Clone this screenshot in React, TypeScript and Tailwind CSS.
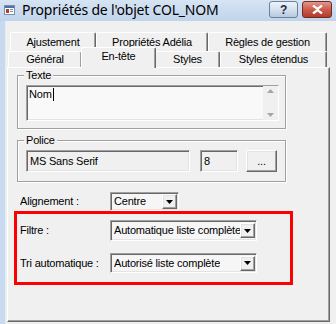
import React from "react";

const sunken =
  "border border-t-[#a0a0a0] border-l-[#a0a0a0] border-b-white border-r-white shadow-[inset_1px_1px_0_#696969,inset_-1px_-1px_0_#e3e3e3]";
const raised =
  "border border-t-white border-l-white border-b-[#696969] border-r-[#696969] shadow-[inset_-1px_-1px_0_#a0a0a0,inset_1px_1px_0_#e3e3e3]";

function Arrow() {
  return (
    <div className={`w-[15px] h-[15px] bg-[#f0f0f0] flex items-center justify-center ${raised}`}>
      <svg width="7" height="4" viewBox="0 0 7 4">
        <path d="M0 0h7L3.5 4z" fill="#000" />
      </svg>
    </div>
  );
}

function Combo({ text, w, h }: { text: string; w: string; h: string }) {
  return (
    <div className={`${w} ${h} bg-[#f6f6f6] flex items-center justify-between pl-[3px] pr-[1px] ${sunken}`}>
      <span className="whitespace-nowrap overflow-hidden">{text}</span>
      <Arrow />
    </div>
  );
}

function Group({ label, className, children }: { label: string; className: string; children: React.ReactNode }) {
  return (
    <div className={`relative border border-[#a0a0a0] shadow-[1px_1px_0_white,inset_1px_1px_0_white] ${className}`}>
      <span className="absolute -top-[8px] left-[6px] px-[2px] bg-[#f0f0f0] leading-[14px]">{label}</span>
      {children}
    </div>
  );
}

function Tab({ label, w, selected }: { label: string; w: string; selected?: boolean }) {
  return (
    <div
      className={`${w} flex justify-center border-t border-l border-t-white border-l-white border-r border-r-[#696969] shadow-[inset_-1px_0_0_#a0a0a0] rounded-tl-[2px] rounded-tr-[2px] bg-[#f0f0f0] ${
        selected ? "relative z-10 h-[21px] -mt-[4px] -mx-[1px] items-start pt-[2px]" : "h-full items-center"
      }`}
    >
      <span className="whitespace-nowrap">{label}</span>
    </div>
  );
}

export default function App() {
  return (
    <div className="w-[336px] h-[324px] overflow-hidden bg-[#f0f0f0] flex flex-col font-['Liberation_Sans',Arial,sans-serif] text-[11px] tracking-[-0.2px] text-black leading-[13px]">
      {/* Title bar */}
      <div className="h-[21px] flex items-center bg-gradient-to-b from-[#d6e4f3] to-[#c0d4eb] relative">
        <svg width="11" height="10" viewBox="0 0 11 10" className="ml-[4px] mt-[-2px]">
          <rect x="0.5" y="0.5" width="10" height="9" fill="#fff" stroke="#7c8ea3" />
          <rect x="1" y="1" width="9" height="2" fill="#4a73b0" />
          <rect x="2" y="4" width="3" height="4" fill="#b04030" />
          <rect x="6" y="4" width="3" height="1" fill="#8090a0" />
          <rect x="6" y="6" width="3" height="1" fill="#8090a0" />
        </svg>
        <span className="ml-[7px] font-['Noto_Sans',sans-serif] text-[14px] tracking-[-0.2px] leading-[18px] mt-[-2px]">
          Propriétés de l'objet COL_NOM
        </span>
        <div className="ml-auto flex gap-[4px] mr-[4px] mt-[-2px]">
          <div className="w-[29px] h-[17px] rounded-[3px] border border-[#6b819b] bg-gradient-to-b from-[#eef3f9] via-[#d5e1ee] to-[#b5c9e0] flex items-center justify-center text-[#1e2a3a] font-['Liberation_Sans',sans-serif] text-[12px] font-bold leading-none">
            ?
          </div>
          <div className="w-[30px] h-[17px] rounded-[3px] border border-[#6e2a24] bg-gradient-to-b from-[#e4958a] via-[#cc5b4c] to-[#b23a2b] flex items-center justify-center">
            <svg width="11" height="9" viewBox="0 0 11 9">
              <path d="M1 0.5l4.5 3.3L10 0.5M1 8.5l4.5-3.3L10 8.5" stroke="#fff" strokeWidth="2.2" fill="none" />
            </svg>
          </div>
        </div>
      </div>

      <div className="flex flex-1">
        <div className="w-[5px] bg-[#c8daef]" />
        <div className="w-[1px] bg-[#e4ecf6]" />
        <div className="flex-1 flex flex-col pt-[11px]">
          {/* Back row of tabs */}
          <div className="flex h-[19px] ml-[4px]">
            <Tab label="Ajustement" w="w-[86px]" />
            <Tab label="Propriétés Adélia" w="w-[112px]" />
            <Tab label="Règles de gestion" w="w-[119px]" />
          </div>
          {/* Front row of tabs */}
          <div className="flex h-[16px] ml-[2px]">
            <Tab label="Général" w="w-[74px]" />
            <Tab label="En-tête" w="w-[75px]" selected />
            <Tab label="Styles" w="w-[65px]" />
            <Tab label="Styles étendus" w="w-[107px]" />
          </div>
          {/* Panel */}
          <div className="ml-[1px] w-[323px] h-[255px] border border-t-white border-l-white border-r-[#696969] border-b-[#696969] shadow-[inset_-1px_-1px_0_#a0a0a0] flex flex-col">
            <Group label="Texte" className="ml-[9px] mt-[7px] w-[269px] h-[54px]">
              <div className={`ml-[8px] mt-[9px] w-[253px] h-[36px] bg-[#f9f9f9] flex ${sunken}`}>
                <div className="flex-1 pl-[2px] pt-[2px] flex items-start">
                  <span>Nom</span>
                  <span className="w-[1px] h-[13px] bg-black ml-[1px]" />
                </div>
                <div className="w-[15px] h-full flex flex-col justify-between items-center py-[3px] bg-[#f0f0f0]">
                  <svg width="7" height="4" viewBox="0 0 7 4">
                    <path d="M3.5 0L7 4H0z" fill="#a6a6a6" />
                  </svg>
                  <svg width="7" height="4" viewBox="0 0 7 4">
                    <path d="M0 0h7L3.5 4z" fill="#a6a6a6" />
                  </svg>
                </div>
              </div>
            </Group>

            <Group label="Police" className="ml-[9px] mt-[11px] w-[269px] h-[42px]">
              <div className="ml-[8px] mt-[9px] flex items-start">
                <div className={`w-[164px] h-[22px] flex items-center pl-[3px] ${sunken}`}>MS Sans Serif</div>
                <div className={`ml-[10px] w-[38px] h-[22px] flex items-center pl-[3px] ${sunken}`}>8</div>
                <div className={`ml-[8px] w-[31px] h-[22px] flex items-center justify-center ${raised}`}>...</div>
              </div>
            </Group>

            <div className="mt-[10px] flex items-center h-[19px]">
              <span className="ml-[12px] w-[90px]">Alignement :</span>
              <Combo text="Centre" w="w-[69px]" h="h-[19px]" />
            </div>

            <div className="ml-[6px] w-[279px] h-[74px] border-[3px] border-[#ff0000] flex flex-col pt-[6px]">
              <div className="flex items-center h-[21px]">
                <span className="ml-[3px] w-[90px]">Filtre :</span>
                <Combo text="Automatique liste complète" w="w-[147px]" h="h-[21px]" />
              </div>
              <div className="flex items-center h-[20px] mt-[12px]">
                <span className="ml-[3px] w-[90px]">Tri automatique :</span>
                <Combo text="Autorisé liste complète" w="w-[147px]" h="h-[20px]" />
              </div>
            </div>
          </div>
        </div>
      </div>
    </div>
  );
}
